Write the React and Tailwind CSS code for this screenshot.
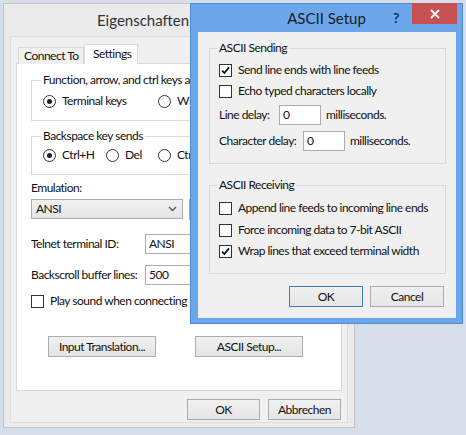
import React from 'react'

function Check({ checked }) {
  return (
    <span className="w-[13px] h-[13px] shrink-0 border border-[#333] bg-white flex items-center justify-center">
      {checked && (
        <svg width="9" height="9" viewBox="0 0 9 9">
          <path d="M1 4.6 L3.4 7 L8 1.4" stroke="#111" strokeWidth="1.8" fill="none" />
        </svg>
      )}
    </span>
  )
}

function Radio({ checked }) {
  return (
    <span className="w-[13px] h-[13px] shrink-0 rounded-full border border-[#333] bg-white flex items-center justify-center">
      {checked && <span className="w-[5px] h-[5px] rounded-full bg-[#222]" />}
    </span>
  )
}

function Option({ children, checked, radio, className = '' }) {
  return (
    <div className={`flex items-center h-4 gap-[6px] whitespace-nowrap ${className}`}>
      {radio ? <Radio checked={checked} /> : <Check checked={checked} />}
      <span>{children}</span>
    </div>
  )
}

function Button({ children, className = '', primary }) {
  return (
    <div
      className={`h-[21px] flex items-center justify-center border bg-linear-to-b from-[#f0f0f0] to-[#e5e5e5] whitespace-nowrap ${
        primary ? 'border-[#3c7fb1]' : 'border-[#acacac]'
      } ${className}`}
    >
      {children}
    </div>
  )
}

function Field({ value, className = '' }) {
  return (
    <div className={`h-[20px] shrink-0 bg-white border border-[#abadb3] flex items-center pl-[3px] ${className}`}>
      {value}
    </div>
  )
}

function Group({ title, className = '', children }) {
  return (
    <fieldset className={`border border-[#d9d9d9] pl-[11px] ${className}`}>
      <legend className="-ml-[2px] px-[2px] leading-4 whitespace-nowrap">{title}</legend>
      {children}
    </fieldset>
  )
}

export default function App() {
  return (
    <div className="relative w-[466px] h-[435px] overflow-hidden bg-[#d6deea] text-[12px] tracking-[-0.5px] text-[#111] font-['Lato',sans-serif]">
      {/* Eigenschaften window */}
      <div className="absolute left-[3px] top-[3px] w-[352px] h-[425px] bg-[#ebebeb] border border-[#c4c4c4] flex flex-col">
        <div className="h-[32px] shrink-0 pl-[93px] flex items-center text-[15px] tracking-normal text-[#333]">Eigenschaften</div>
        <div className="mx-[6px] mb-[4px] flex-1 bg-[#f0f0f0] border border-[#dedede] pl-[5px] pt-[7px]">
          <div className="flex items-end h-[20px] -mb-px">
            <div className="ml-[2px] w-[66px] h-[17px] border border-b-0 border-[#d9d9d9] bg-[#f0f0f0] pl-[5px] flex items-center whitespace-nowrap">
              Connect To
            </div>
            <div className="relative z-10 w-[54px] h-[20px] border border-b-0 border-[#d9d9d9] bg-white pl-[8px] pb-[2px] flex items-center whitespace-nowrap">
              Settings
            </div>
          </div>
          <div className="w-[326px] h-[328px] bg-white border border-[#d9d9d9] pl-[14px] pt-[8px] flex flex-col">
            <Group title="Function, arrow, and ctrl keys act as" className="w-[297px] h-[49px]">
              <div className="mt-[5px] flex">
                <Option radio checked className="w-[115px]">Terminal keys</Option>
                <Option radio>Windows keys</Option>
              </div>
            </Group>
            <Group title="Backspace key sends" className="mt-[7px] w-[297px] h-[47px]">
              <div className="mt-[3px] flex">
                <Option radio checked className="w-[63px]">Ctrl+H</Option>
                <Option radio className="w-[52px]">Del</Option>
                <Option radio>Ctrl+Backspace</Option>
              </div>
            </Group>
            <div className="mt-[5px] leading-4">Emulation:</div>
            <div className="mt-[3px] flex gap-[6px]">
              <div className="w-[152px] h-[20px] border border-[#acacac] bg-linear-to-b from-[#f0f0f0] to-[#e5e5e5] flex items-center justify-between pl-[4px] pr-[5px]">
                <span>ANSI</span>
                <svg width="9" height="6" viewBox="0 0 9 6">
                  <path d="M1 1 L4.5 4.5 L8 1" stroke="#555" strokeWidth="1.3" fill="none" />
                </svg>
              </div>
              <Button className="w-[138px] h-[20px]" />
            </div>
            <div className="mt-[14px] flex items-center whitespace-nowrap">
              <span className="w-[114px] shrink-0">Telnet terminal ID:</span>
              <Field value="ANSI" className="w-[110px]" />
            </div>
            <div className="mt-[11px] flex items-center whitespace-nowrap">
              <span className="w-[114px] shrink-0">Backscroll buffer lines:</span>
              <Field value="500" className="w-[110px]" />
            </div>
            <Option className="mt-[8px]">Play sound when connecting or disconnecting</Option>
            <div className="mt-[27px] ml-[17px] flex gap-[39px]">
              <Button className="w-[108px]">Input Translation...</Button>
              <Button className="w-[108px]">ASCII Setup...</Button>
            </div>
          </div>
          <div className="mt-[8px] w-[326px] pr-px flex justify-end gap-[8px]">
            <Button className="w-[73px]">OK</Button>
            <Button className="w-[73px]">Abbrechen</Button>
          </div>
        </div>
      </div>

      {/* ASCII Setup dialog */}
      <div className="absolute left-[190px] top-[3px] w-[273px] h-[321px] bg-[#6ca7ec] border border-[#4f8bd3] flex flex-col">
        <div className="relative h-[28px] shrink-0 flex items-center justify-center text-[15px] tracking-normal text-[#1b1b1b]">
          ASCII Setup
          <span className="absolute left-[202px] top-[3px] text-[14px] font-bold text-[#1d3350]">?</span>
          <div className="absolute right-[5px] -top-px w-[45px] h-[21px] bg-[#c75050] flex items-center justify-center">
            <svg width="10" height="10" viewBox="0 0 10 10">
              <path d="M1 1 L9 9 M9 1 L1 9" stroke="#fff" strokeWidth="1.8" />
            </svg>
          </div>
        </div>
        <div className="ml-[7px] mr-[6px] mb-[5px] flex-1 bg-[#f0f0f0] flex flex-col">
          <Group title="ASCII Sending" className="ml-[11px] mt-[8px] w-[237px] h-[124px] !pl-[9px]">
            <Option checked className="mt-[6px]">Send line ends with line feeds</Option>
            <Option className="mt-[5px]">Echo typed characters locally</Option>
            <div className="mt-[6px] flex items-center whitespace-nowrap">
              <span className="w-[60px] shrink-0">Line delay:</span>
              <Field value="0" className="w-[42px]" />
              <span className="ml-[5px]">milliseconds.</span>
            </div>
            <div className="mt-[6px] flex items-center whitespace-nowrap">
              <span className="w-[84px] shrink-0">Character delay:</span>
              <Field value="0" className="w-[42px]" />
              <span className="ml-[5px]">milliseconds.</span>
            </div>
          </Group>
          <Group title="ASCII Receiving" className="ml-[11px] mt-[13px] w-[237px] h-[97px] !pl-[9px]">
            <Option className="mt-[7px]">Append line feeds to incoming line ends</Option>
            <Option className="mt-[6px]">Force incoming data to 7-bit ASCII</Option>
            <Option checked className="mt-[5px]">Wrap lines that exceed terminal width</Option>
          </Group>
          <div className="mt-[12px] pr-[12px] flex justify-end gap-[7px]">
            <Button primary className="w-[74px]">OK</Button>
            <Button className="w-[74px]">Cancel</Button>
          </div>
        </div>
      </div>
    </div>
  )
}
